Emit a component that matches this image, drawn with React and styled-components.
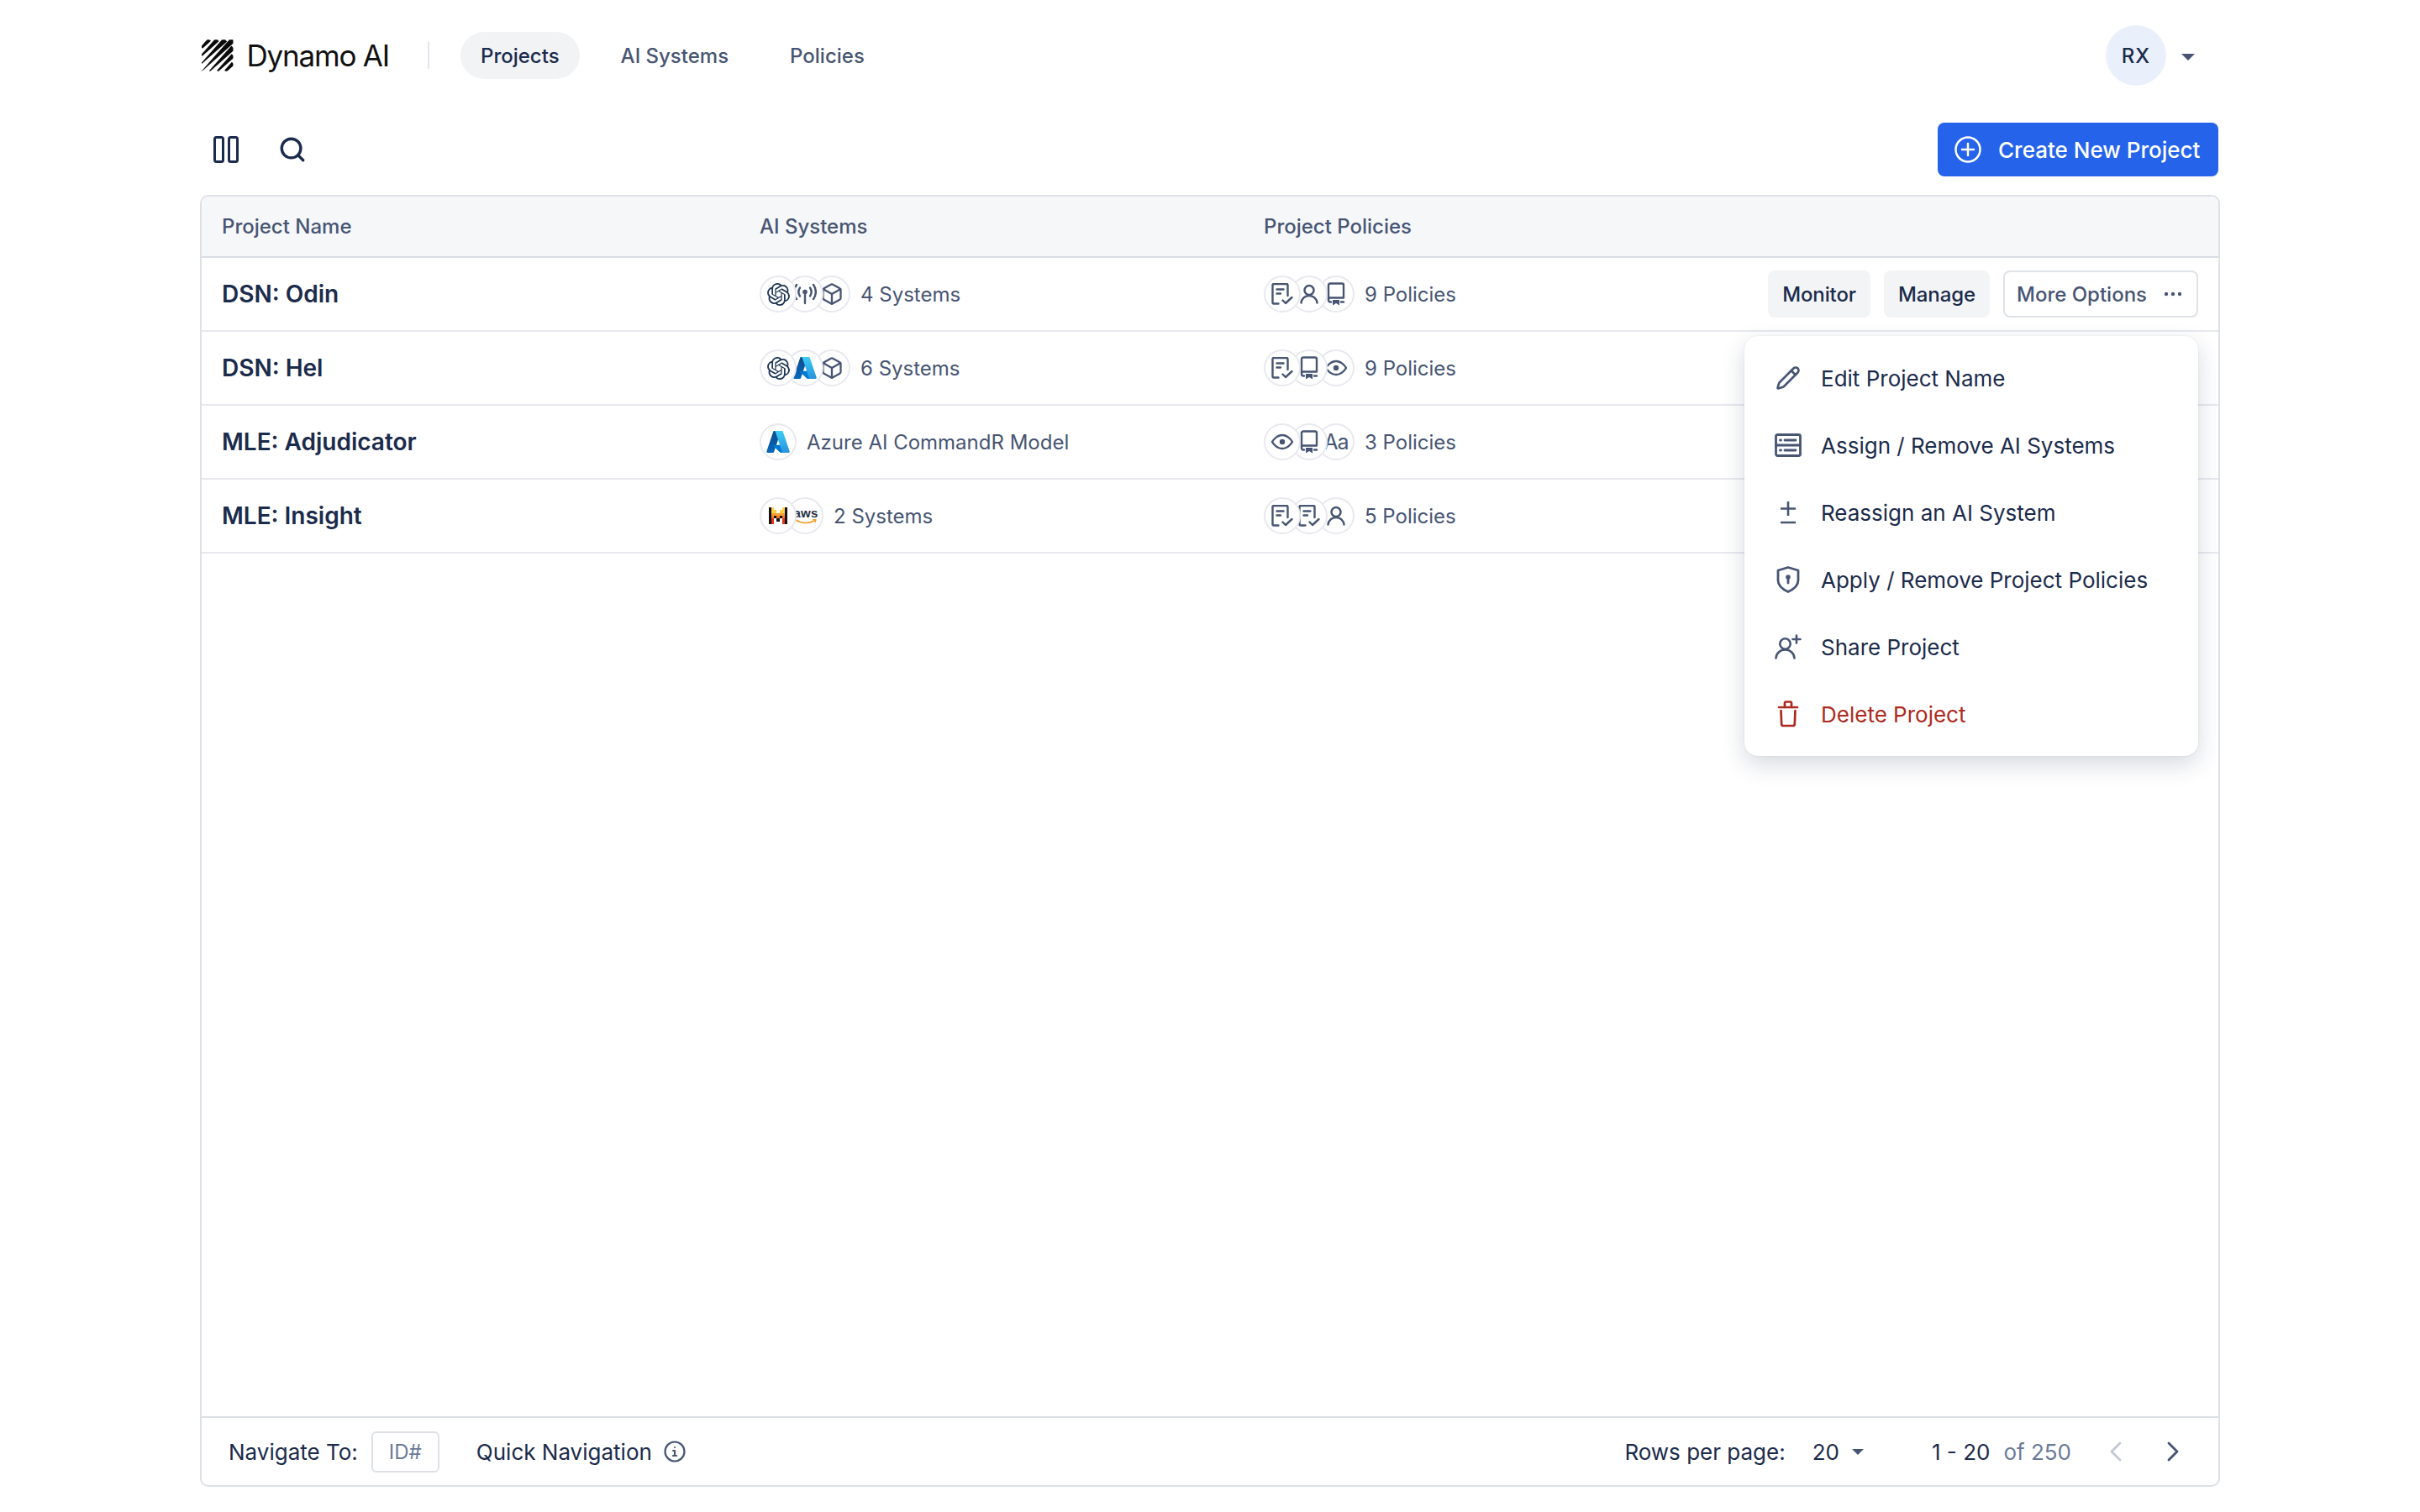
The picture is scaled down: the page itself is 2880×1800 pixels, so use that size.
import React from "react";
import styled, { createGlobalStyle } from "styled-components";
import { SiOpenai } from "react-icons/si";
import { Box, Search, ChevronLeft, ChevronRight, Pencil } from "lucide-react";

const Global = createGlobalStyle`
  html, body { margin: 0; padding: 0; background: #fff; }
  body { font-family: Inter, "Noto Sans", sans-serif; color: #1e2f4f; -webkit-font-smoothing: antialiased; }
`;

const NAVY = "#1b2b4b";
const SLATE = "#475573";

const Page = styled.div`
  width: 2880px; height: 1800px; box-sizing: border-box;
  padding: 30px 238px 30px; display: flex; flex-direction: column;
`;
const Nav = styled.header`
  display: flex; align-items: center; height: 72px; padding-right: 30px;
`;
const Brand = styled.div`
  display: flex; align-items: center; gap: 16px; margin-left: 2px; white-space: nowrap;
  font-size: 35px; letter-spacing: -1.2px; color: #111; width: 223px;
`;
const NavDivider = styled.span`
  width: 2px; height: 32px; background: #e2e5ea; margin: 0 37px 0 46px;
`;
const NavItem = styled.a`
  display: flex; align-items: center; height: 56px; padding: 0 24px; border-radius: 28px;
  font-size: 24px; font-weight: 500; margin-right: ${p => p.$mr}px;
  color: ${p => p.$active ? NAVY : SLATE}; background: ${p => p.$active ? "#f1f3f5" : "transparent"};
`;
const Spacer = styled.div`flex: 1;`;
const Avatar = styled.div`
  width: 72px; height: 72px; border-radius: 50%; background: #eaf0fb; display: flex; align-items: center; justify-content: center;
  font-size: 24px; font-weight: 500; letter-spacing: 1px; color: ${NAVY};
`;
const Caret = styled.span`
  width: 0; height: 0; border-left: ${p => p.$s}px solid transparent; border-right: ${p => p.$s}px solid transparent;
  border-top: ${p => p.$s}px solid ${SLATE}; margin-left: ${p => p.$ml}px; margin-top: ${p => p.$mt || 0}px;
`;
const Toolbar = styled.div`
  display: flex; align-items: center; height: 64px; margin-top: 44px; padding-left: 16px;
`;
const ToolIcon = styled.span`
  display: flex; color: ${NAVY}; margin-right: ${p => p.$mr}px; margin-left: ${p => p.$ml || 0}px;
`;
const PrimaryButton = styled.button`
  display: flex; align-items: center; gap: 20px; height: 64px; width: 334px; box-sizing: border-box; padding: 0 20px;
  border: 0; border-radius: 8px; background: #2563eb; color: #fff;
  font: 500 26px Inter, sans-serif; margin-right: 2px;
`;
const Table = styled.section`
  position: relative; margin-top: 22px; flex: 1; box-sizing: border-box;
  border: 2px solid #dde1e6; border-radius: 10px; display: flex; flex-direction: column; width: 2404px;
`;
const HeaderRow = styled.div`
  display: grid; grid-template-columns: 640px 600px 1fr; align-items: center; height: 71px; padding-left: 24px;
  background: #f6f7f9; border-bottom: 2px solid #d9dce3; border-radius: 8px 8px 0 0;
  font-size: 24px; font-weight: 500; color: ${SLATE};
`;
const Row = styled.div`
  display: grid; grid-template-columns: 640px 600px 1fr; align-items: center; height: 86px; padding-left: 24px;
  border-bottom: 2px solid #e8e9ef;
`;
const Name = styled.div`
  font-size: 28px; font-weight: 600; color: ${NAVY};
`;
const Cell = styled.div`
  display: flex; align-items: center; font-size: 24px; color: ${SLATE};
`;
const Stack = styled.div`
  display: flex; margin-right: 12px;
`;
const Bubble = styled.span`
  width: 44px; height: 44px; box-sizing: border-box; border-radius: 50%; border: 2px solid #e8e9ef; background: #fff;
  display: flex; align-items: center; justify-content: center; overflow: hidden; color: ${p => p.$dark ? "#1f3557" : SLATE};
  margin-left: ${p => p.$first ? 0 : -12}px; position: relative; z-index: ${p => p.$z}; flex: none;
`;
const Actions = styled.div`
  display: flex; justify-content: flex-end; gap: 16px; padding-right: 24px; margin-left: auto;
`;
const Soft = styled.button`
  height: 56px; padding: 0 17px; border: 0; border-radius: 8px; background: #f3f4f6; color: ${NAVY};
  font: 500 24px Inter, sans-serif; letter-spacing: -0.1px;
`;
const Outline = styled.button`
  display: flex; align-items: center; justify-content: space-between; height: 56px; width: 232px; box-sizing: border-box; padding: 0 17px 0 14px;
  background: #fff; border: 2px solid #dfe2e7; border-radius: 8px; color: ${SLATE};
  font: 500 24px Inter, sans-serif;
`;
const Body = styled.div`flex: 1;`;
const Footer = styled.footer`
  display: flex; align-items: center; height: 80px; border-top: 2px solid #dde1e6; padding: 0 34px 0 32px;
  font-size: 26px; color: ${NAVY};
`;
const IdInput = styled.span`
  width: 81px; height: 49px; box-sizing: border-box; border: 2px solid #dde1e6; border-radius: 6px; margin: 0 44px 0 16px;
  display: flex; align-items: center; justify-content: center; font-size: 24px; color: #6b7a99;
`;
const Gapped = styled.span`margin-left: ${p => p.$ml}px;`;
const Muted = styled.span`color: #6b7a99; margin: 0 33px 0 16px;`;
const NextChevron = styled.span`display: flex; margin-left: 28px;`;
const Menu = styled.div`
  position: absolute; left: 1836px; top: 166px; width: 540px; height: 500px; box-sizing: border-box; padding: 10px 0;
  background: #fff; border-radius: 16px; box-shadow: 0 10px 28px rgba(30,45,75,.18), 0 0 2px rgba(30,45,75,.12); z-index: 20;
`;
const MenuItem = styled.div`
  display: flex; align-items: center; height: 80px; padding-left: 35px; gap: 22px; font-size: 26px;
  color: ${p => p.$danger ? "#ad2a20" : NAVY};
`;
const MenuIcon = styled.span`
  display: flex; width: 34px; justify-content: center; color: ${p => p.$danger ? "#ad2a20" : SLATE};
`;

const bands = [10, 20, 30, 40, 50, 60, 70].map(c => {
  const x1 = Math.max(0, c - 40), y1 = c - x1;
  const y2 = Math.max(0, c - 40), x2 = c - y2;
  const w = (x, y) => 0.25 + 3.4 * (x - y + 40) / 80;
  const n = 0.7071;
  const a = w(x1, y1) * n, b = w(x2, y2) * n;
  return `${x1 - a},${y1 - a} ${x2 - b},${y2 - b} ${x2 + b},${y2 + b} ${x1 + a},${y1 + a}`;
});
const Logo = () => (
  <svg width="40" height="40" viewBox="0 0 40 40">
    <defs><clipPath id="logoClip"><rect width="40" height="40" /></clipPath></defs>
    <g clipPath="url(#logoClip)">
      {bands.map((pts, i) => <polygon key={i} points={pts} fill="#0a0a0a" />)}
    </g>
  </svg>
);
const Azure = ({s=30}) => (
  <svg width={s} height={s} viewBox="0 0 96 96">
    <defs>
      <linearGradient id="az1" x1="46.1" y1="9" x2="21.8" y2="90" gradientUnits="userSpaceOnUse"><stop offset="0" stopColor="#114a8b"/><stop offset="1" stopColor="#0669bc"/></linearGradient>
      <linearGradient id="az2" x1="65" y1="6" x2="80" y2="90" gradientUnits="userSpaceOnUse"><stop offset="0" stopColor="#3ccbf4"/><stop offset="1" stopColor="#2892df"/></linearGradient>
    </defs>
    <path d="M33.34 6.54h26.04l-27.03 80.1a4.15 4.15 0 0 1-3.94 2.81H8.15a4.14 4.14 0 0 1-3.93-5.47L29.4 9.35a4.15 4.15 0 0 1 3.94-2.81z" fill="url(#az1)"/>
    <path d="M71.17 60.26H29.88a1.91 1.91 0 0 0-1.3 3.31l26.53 24.76a4.17 4.17 0 0 0 2.85 1.13h23.38z" fill="#0078d4"/>
    <path d="M66.6 9.36a4.14 4.14 0 0 0-3.93-2.82H33.65a4.15 4.15 0 0 1 3.93 2.82l25.18 74.62a4.15 4.15 0 0 1-3.93 5.48h29.02a4.15 4.15 0 0 0 3.93-5.48z" fill="url(#az2)"/>
  </svg>
);
const palette = { K: "#111", Y: "#fbcf3e", O: "#f6a032", D: "#f27a23", R: "#e7331c", _: "#fff" };
const mistralGrid = ["KY___YK", "KYY_YYK", "KOOOOOK", "KDKDKDK", "KR_K_RK", "KR___RK"];
const Mistral = () => (
  <svg width="22" height="20" viewBox="0 0 21 18" shapeRendering="crispEdges" preserveAspectRatio="none">
    {mistralGrid.flatMap((row, y) => row.split("").map((c, x) => (
      <rect key={`${x}-${y}`} x={x * 3} y={y * 3} width="3" height="3" fill={palette[c]} />
    )))}
  </svg>
);
const AwsText = styled.span`
  font: 700 15px/1 "Liberation Sans", sans-serif; letter-spacing: .2px; color: #252f3e; display: block; margin-top: -1px;
`;
const AwsMark = styled.span`
  display: flex; flex-direction: column; align-items: center; margin-left: 2px;
`;
const Aws = () => (
  <AwsMark>
    <AwsText>aws</AwsText>
    <svg width="26" height="6" viewBox="0 0 26 6"><path d="M1 1c7 4.500 16 4.500 23 .5" fill="none" stroke="#f79a1f" strokeWidth="1.500"/><path d="M21 .5l4 .2-1 3.400" fill="none" stroke="#f79a1f" strokeWidth="1.200"/></svg>
  </AwsMark>
);
const Policy = () => (
  <svg width="26" height="26" viewBox="0 0 26 26" fill="none" stroke="currentColor" strokeWidth="2.400" strokeLinecap="round" strokeLinejoin="round">
    <path d="M8.500 24.500H3a1.500 1.500 0 0 1-1.500-1.500V2.500A1.500 1.500 0 0 1 3 1h15a1.500 1.500 0 0 1 1.500 1.500V15"/>
    <path d="M6.500 7.500h8M6.500 12.500h4.500"/>
    <path d="M13.500 20.500l3.500 3.500 7.500-7" />
  </svg>
);
const User = () => (
  <svg width="24" height="24" viewBox="0 0 24 24" fill="none" stroke="currentColor" strokeWidth="2.500" strokeLinecap="round">
    <circle cx="12" cy="7.500" r="5.500"/>
    <path d="M2.500 22.500c.6-5 4.400-8.500 9.500-8.500s8.900 3.500 9.500 8.500"/>
  </svg>
);
const Book = () => (
  <svg width="26" height="28" viewBox="0 0 26 28" fill="none" stroke="currentColor" strokeWidth="2.400" strokeLinecap="round" strokeLinejoin="round">
    <path d="M7 23.500H6a2 2 0 0 1-2-2V3.500a2 2 0 0 1 2-2h14a2 2 0 0 1 2 2V18.500H6a2 2 0 0 0-2 2"/>
    <path d="M19 23.500h3"/>
    <path d="M9 21h8v6.500l-4-2.500-4 2.500z" fill="currentColor" stroke="none"/>
  </svg>
);
const Eye = () => (
  <svg width="28" height="28" viewBox="0 0 28 28" fill="none" stroke="currentColor" strokeWidth="2.400" strokeLinecap="round" strokeLinejoin="round">
    <path d="M2 14s4.500-8 12-8 12 8 12 8-4.500 8-12 8-12-8-12-8z"/>
    <circle cx="14" cy="14" r="3.200" fill="currentColor" stroke="none"/>
  </svg>
);
const AaMark = styled.span`
  font: 400 25px/1 Inter, sans-serif; letter-spacing: -1px; color: ${SLATE};
`;
const Signal = () => (
  <svg width="28" height="28" viewBox="0 0 28 28" fill="none" stroke="currentColor" strokeWidth="2.400" strokeLinecap="round">
    <circle cx="14" cy="11.500" r="2.800" fill="currentColor" stroke="none"/>
    <path d="M14 12v13"/>
    <path d="M20 6.500a9 9 0 0 1 0 10M24 3a14 14 0 0 1 0 17"/>
    <path d="M8 6.500a9 9 0 0 0 0 10M4 3a14 14 0 0 0 0 17"/>
  </svg>
);
const SysOpen = () => <SiOpenai size={27} />;
const BoxI = () => <Box size={28} strokeWidth={2} />;

const Stacked = ({ items }) => (
  <Stack>
    {items.map((it, i) => (
      <Bubble key={i} $first={i === 0} $z={10 - i} $dark={it.dark}>{it.el}</Bubble>
    ))}
  </Stack>
);
const O = { el: <SysOpen />, dark: true };
const R = { el: <Signal /> };
const B = { el: <BoxI /> };
const Az = { el: <Azure /> };
const Mi = { el: <Mistral /> };
const Aw = { el: <Aws /> };
const P = { el: <Policy /> };
const U = { el: <User /> };
const K = { el: <Book /> };
const E = { el: <Eye /> };
const A = { el: <AaMark>Aa</AaMark> };

const rows = [
  { name: "DSN: Odin", sys: [O, R, B], sysLabel: "4 Systems", pol: [P, U, K], polLabel: "9 Policies", actions: true },
  { name: "DSN: Hel", sys: [O, Az, B], sysLabel: "6 Systems", pol: [P, K, E], polLabel: "9 Policies" },
  { name: "MLE: Adjudicator", sys: [Az], sysLabel: "Azure AI CommandR Model", pol: [E, K, A], polLabel: "3 Policies" },
  { name: "MLE: Insight", sys: [Mi, Aw], sysLabel: "2 Systems", pol: [P, P, U], polLabel: "5 Policies" },
];

const ColumnsIcon = () => (
  <svg width="30" height="32" viewBox="0 0 30 32" fill="none" stroke="currentColor" strokeWidth="3">
    <rect x="1.500" y="1.500" width="10" height="29" rx="2"/>
    <rect x="18.500" y="1.500" width="10" height="29" rx="2"/>
  </svg>
);
const PlusCircle = () => (
  <svg width="32" height="32" viewBox="0 0 32 32" fill="none" stroke="#fff" strokeWidth="2.500" strokeLinecap="round">
    <circle cx="16" cy="16" r="14.500"/><path d="M16 9v14M9 16h14"/>
  </svg>
);
const Dots = () => (
  <svg width="22" height="6" viewBox="0 0 22 6" fill={SLATE}><circle cx="3" cy="3" r="2.200"/><circle cx="11" cy="3" r="2.200"/><circle cx="19" cy="3" r="2.200"/></svg>
);
const ServerIcon = () => (
  <svg width="32" height="28" viewBox="0 0 32 28" fill="none" stroke="currentColor" strokeWidth="2.800" strokeLinecap="round">
    <rect x="1.500" y="1.500" width="29" height="25" rx="2"/>
    <path d="M2 14h28"/><path d="M6.500 8h1M12 8h13M6.500 20h1M12 20h13"/>
  </svg>
);
const PlusMinus = () => (
  <svg width="22" height="28" viewBox="0 0 22 28" fill="none" stroke="currentColor" strokeWidth="2.600">
    <path d="M2 9.500h18M11 1v17M2 26h18"/>
  </svg>
);
const Shield = () => (
  <svg width="28" height="32" viewBox="0 0 28 32" fill="none" stroke="currentColor" strokeWidth="2.800" strokeLinejoin="round">
    <path d="M14 1.500l12 3.500v12c0 6.500-5.500 10.500-12 13.500C7.500 27.500 2 23.500 2 17V5z"/>
    <circle cx="14" cy="13" r="2.800" fill="currentColor" stroke="none"/><path d="M14 13v7" strokeLinecap="round"/>
  </svg>
);
const UserPlus = () => (
  <svg width="32" height="30" viewBox="0 0 32 30" fill="none" stroke="currentColor" strokeWidth="2.600" strokeLinecap="round">
    <circle cx="12.500" cy="11.500" r="6.200"/>
    <path d="M1.500 28.500c.5-6 5-10 11-10s10.500 4 11 10"/>
    <path d="M26 1.500v9M21.500 6h9"/>
  </svg>
);
const Trash = () => (
  <svg width="26" height="32" viewBox="0 0 26 32" fill="none" stroke="currentColor" strokeWidth="2.700" strokeLinejoin="round" strokeLinecap="round">
    <path d="M2 8h22"/><path d="M9 8V3a1.500 1.500 0 0 1 1.500-1.500h5A1.500 1.500 0 0 1 17 3v5"/>
    <path d="M4.500 12l.7 16a2 2 0 0 0 2 2h11.600a2 2 0 0 0 2-2l.7-16"/>
  </svg>
);
const InfoIcon = () => (
  <svg width="26" height="26" viewBox="0 0 26 26" fill="none" stroke={SLATE} strokeWidth="2.200" strokeLinecap="round">
    <circle cx="13" cy="13" r="11.500"/><path d="M13 12v6M11 12h2M11 18h4"/><circle cx="13" cy="8" r="1.100" fill={SLATE} stroke="none"/>
  </svg>
);

export default function App() {
  return (
    <Page>
      <Global />
      <Nav>
        <Brand><Logo />Dynamo AI</Brand>
        <NavDivider />
        <NavItem $active $mr={25}>Projects</NavItem>
        <NavItem $mr={25}>AI Systems</NavItem>
        <NavItem>Policies</NavItem>
        <Spacer />
        <Avatar>RX</Avatar>
        <Caret $s={8} $ml={18} $mt={4} />
      </Nav>
      <Toolbar>
        <ToolIcon $mr={47}><ColumnsIcon /></ToolIcon>
        <ToolIcon><Search size={34} strokeWidth={2.4} /></ToolIcon>
        <Spacer />
        <PrimaryButton><PlusCircle />Create New Project</PrimaryButton>
      </Toolbar>
      <Table>
        <HeaderRow><div>Project Name</div><div>AI Systems</div><div>Project Policies</div></HeaderRow>
        {rows.map(r => (
          <Row key={r.name}>
            <Name>{r.name}</Name>
            <Cell><Stacked items={r.sys} />{r.sysLabel}</Cell>
            <Cell>
              <Stacked items={r.pol} />{r.polLabel}
              {r.actions && (
                <Actions>
                  <Soft>Monitor</Soft><Soft>Manage</Soft>
                  <Outline>More Options<Dots /></Outline>
                </Actions>
              )}
            </Cell>
          </Row>
        ))}
        <Body />
        <Footer>
          Navigate To:<IdInput>ID#</IdInput>Quick Navigation
          <ToolIcon $mr={0} $ml={14}><InfoIcon /></ToolIcon>
          <Spacer />
          Rows per page:
          <Gapped $ml={32}>20</Gapped><Caret $s={7} $ml={15} />
          <Gapped $ml={81}>1 - 20</Gapped><Muted>of 250</Muted>
          <ChevronLeft size={40} color="#c3c9d5" strokeWidth={1.700} />
          <NextChevron><ChevronRight size={40} color={SLATE} strokeWidth={1.700} /></NextChevron>
        </Footer>
        <Menu>
          <MenuItem><MenuIcon><Pencil size={30} strokeWidth={2.100} /></MenuIcon>Edit Project Name</MenuItem>
          <MenuItem><MenuIcon><ServerIcon /></MenuIcon>Assign / Remove AI Systems</MenuItem>
          <MenuItem><MenuIcon><PlusMinus /></MenuIcon>Reassign an AI System</MenuItem>
          <MenuItem><MenuIcon><Shield /></MenuIcon>Apply / Remove Project Policies</MenuItem>
          <MenuItem><MenuIcon><UserPlus /></MenuIcon>Share Project</MenuItem>
          <MenuItem $danger><MenuIcon $danger><Trash /></MenuIcon>Delete Project</MenuItem>
        </Menu>
      </Table>
    </Page>
  );
}
